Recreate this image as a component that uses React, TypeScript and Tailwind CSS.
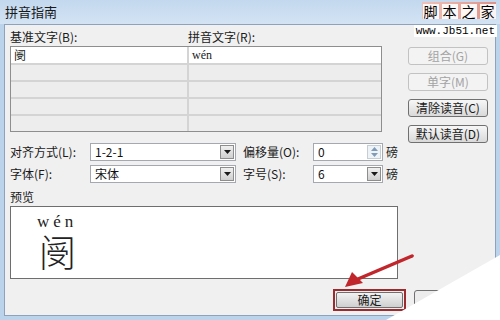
import type { ReactNode } from "react";

const font = "font-['Noto_Sans_CJK_SC','Liberation_Sans',sans-serif]";

function WinButton({ children, disabled }: { children: ReactNode; disabled?: boolean }) {
	return (
		<div
			className={
				disabled
					? "h-[18px] w-[80px] rounded-[3px] border border-[#c2c2c2] bg-[#f3f3f3] text-[#a3a3a3] text-[12px] leading-[16px] flex items-center justify-center"
					: "h-[18px] w-[80px] rounded-[3px] border border-[#707070] bg-linear-to-b from-[#f7f7f7] to-[#d9d9d9] text-[#1a1a1a] text-[12px] leading-[16px] flex items-center justify-center"
			}
		>
			{children}
		</div>
	);
}

function DropArrow() {
	return (
		<div className="w-[14px] h-[14px] border border-[#8d8d8d] bg-linear-to-b from-[#f0f0f0] to-[#cfcfcf] flex items-center justify-center">
			<svg width="7" height="4" viewBox="0 0 7 4">
				<path d="M0 0 L7 0 L3.5 4 Z" fill="#1a1a1a" />
			</svg>
		</div>
	);
}

function Combo({ value, width }: { value: string; width: string }) {
	return (
		<div className={`${width} h-[18px] bg-white border border-[#a5a8ae] flex items-center justify-between pl-[4px] pr-[1px]`}>
			<span className="text-[12px] leading-none text-[#111]">{value}</span>
			<DropArrow />
		</div>
	);
}

function Spin({ value }: { value: string }) {
	return (
		<div className="w-[70px] h-[18px] bg-white border border-[#a5a8ae] flex items-center justify-between pl-[4px] pr-[1px]">
			<span className="text-[12px] leading-none text-[#111]">{value}</span>
			<div className="w-[14px] h-[14px] border border-[#c5cdd6] bg-[#eef3f8] flex flex-col items-center justify-center gap-[2px]">
				<svg width="7" height="4" viewBox="0 0 7 4">
					<path d="M0 4 L7 4 L3.5 0 Z" fill="#7f9bb8" />
				</svg>
				<svg width="7" height="4" viewBox="0 0 7 4">
					<path d="M0 0 L7 0 L3.5 4 Z" fill="#7f9bb8" />
				</svg>
			</div>
		</div>
	);
}

export default function App() {
	const rows = [0, 1, 2, 3, 4];

	return (
		<main className={`relative w-[500px] h-[320px] overflow-hidden bg-[#bcd3ec] ${font} text-[#1a1a1a]`}>
			{/* title bar */}
			<div className="h-[24px] pl-[5px] flex items-center bg-linear-to-b from-[#c3d8ee] to-[#d3e3f4] text-[13px]">
				拼音指南
			</div>

			{/* client area */}
			<div className="ml-[4px] mr-[4px] h-[292px] bg-[#f0f0f0] border border-[#8ea3bb] pl-[5px] pt-[3px]">
				<div className="flex">
					<div className="w-[372px]">
						<div className="flex h-[18px] items-center text-[12px]">
							<span className="w-[178px]">基准文字(B):</span>
							<span>拼音文字(R):</span>
						</div>
						<div className="grid grid-cols-[176px_192px] gap-[2px] bg-[#d4d4d4] border border-[#8e8e8e]">
							{rows.map((r) => (
								<div key={r} className="contents">
									<div className={r === 0 ? "h-[16px] bg-white pl-[3px] text-[12px] leading-[16px]" : "h-[15px] bg-[#ededed]"}>
										{r === 0 ? "阌" : ""}
									</div>
									<div className={r === 0 ? "h-[16px] bg-white pl-[3px] text-[12px] leading-[16px] font-['Liberation_Serif',serif]" : "h-[15px] bg-[#ededed]"}>
										{r === 0 ? "wén" : ""}
									</div>
								</div>
							))}
						</div>
					</div>
					<div className="ml-[26px] pt-[19px] flex flex-col gap-[8px]">
						<WinButton disabled>组合(G)</WinButton>
						<WinButton disabled>单字(M)</WinButton>
						<WinButton>清除读音(C)</WinButton>
						<WinButton>默认读音(D)</WinButton>
					</div>
				</div>

				{/* options */}
				<div className="mt-[0px] flex flex-col gap-[4px] text-[12px]">
					<div className="flex items-center">
						<span className="w-[80px]">对齐方式(L):</span>
						<Combo value="1-2-1" width="w-[146px]" />
						<span className="w-[70px] ml-[7px]">偏移量(O):</span>
						<Spin value="0" />
						<span className="ml-[3px]">磅</span>
					</div>
					<div className="flex items-center">
						<span className="w-[80px]">字体(F):</span>
						<Combo value="宋体" width="w-[146px]" />
						<span className="w-[70px] ml-[7px]">字号(S):</span>
						<Combo value="6" width="w-[70px]" />
						<span className="ml-[3px]">磅</span>
					</div>
				</div>

				<div className="mt-[5px] h-[17px] text-[12px] leading-[17px]">预览</div>

				{/* preview */}
				<div className="mt-[1px] w-[388px] h-[73px] bg-white border border-[#6e6e6e] pl-[26px] pt-[6px] flex flex-col">
					<span className="font-['Liberation_Serif',serif] text-[17px] leading-[17px] tracking-[4px] text-[#222]">wén</span>
					<span className="text-[37px] leading-[42px] font-light ml-[2px] text-[#222]">阌</span>
				</div>

				{/* bottom buttons */}
				<div className="mt-[10px] flex">
					<div className="ml-[323px] border-2 border-[#9c2b30] p-[1px]">
						<div className="h-[16px] w-[67px] rounded-[2px] border border-[#6f6f6f] bg-linear-to-b from-[#f2f2f2] to-[#cfcfcf] text-[12px] leading-[14px] flex items-center justify-center">
							确定
						</div>
					</div>
					<div className="ml-[8px] mt-[1px] h-[19px] w-[74px] rounded-[3px] border border-[#707070] bg-[#ececec]" />
				</div>
			</div>

			{/* watermark */}
			<div className="absolute right-[4px] top-[2px] w-[74px] h-[17px] bg-linear-to-r from-[#efc2b9] to-[#dc9288] flex items-end justify-center gap-[3px]">
				{["脚", "本", "之", "家"].map((c) => (
					<span key={c} className="bg-white/90 text-[14px] leading-[15px] px-[1px] text-black">{c}</span>
				))}
			</div>
			<div className="absolute right-[3px] top-[25px] bg-white px-[2px] font-['Liberation_Mono',monospace] text-[11px] leading-[12px] text-black">
				www.Jb51.net
			</div>

			{/* red arrow and page corner */}
			<svg className="absolute left-0 top-0" width="500" height="320" viewBox="0 0 500 320">
				<line x1="412" y1="256" x2="358" y2="279" stroke="#c0262b" strokeWidth="3.5" strokeLinecap="round" />
				<path d="M345 287 L352 272 L363 283 Z" fill="#c0262b" />
				<polygon points="386,320 500,255 500,320" fill="#ffffff" />
			</svg>
		</main>
	);
}
